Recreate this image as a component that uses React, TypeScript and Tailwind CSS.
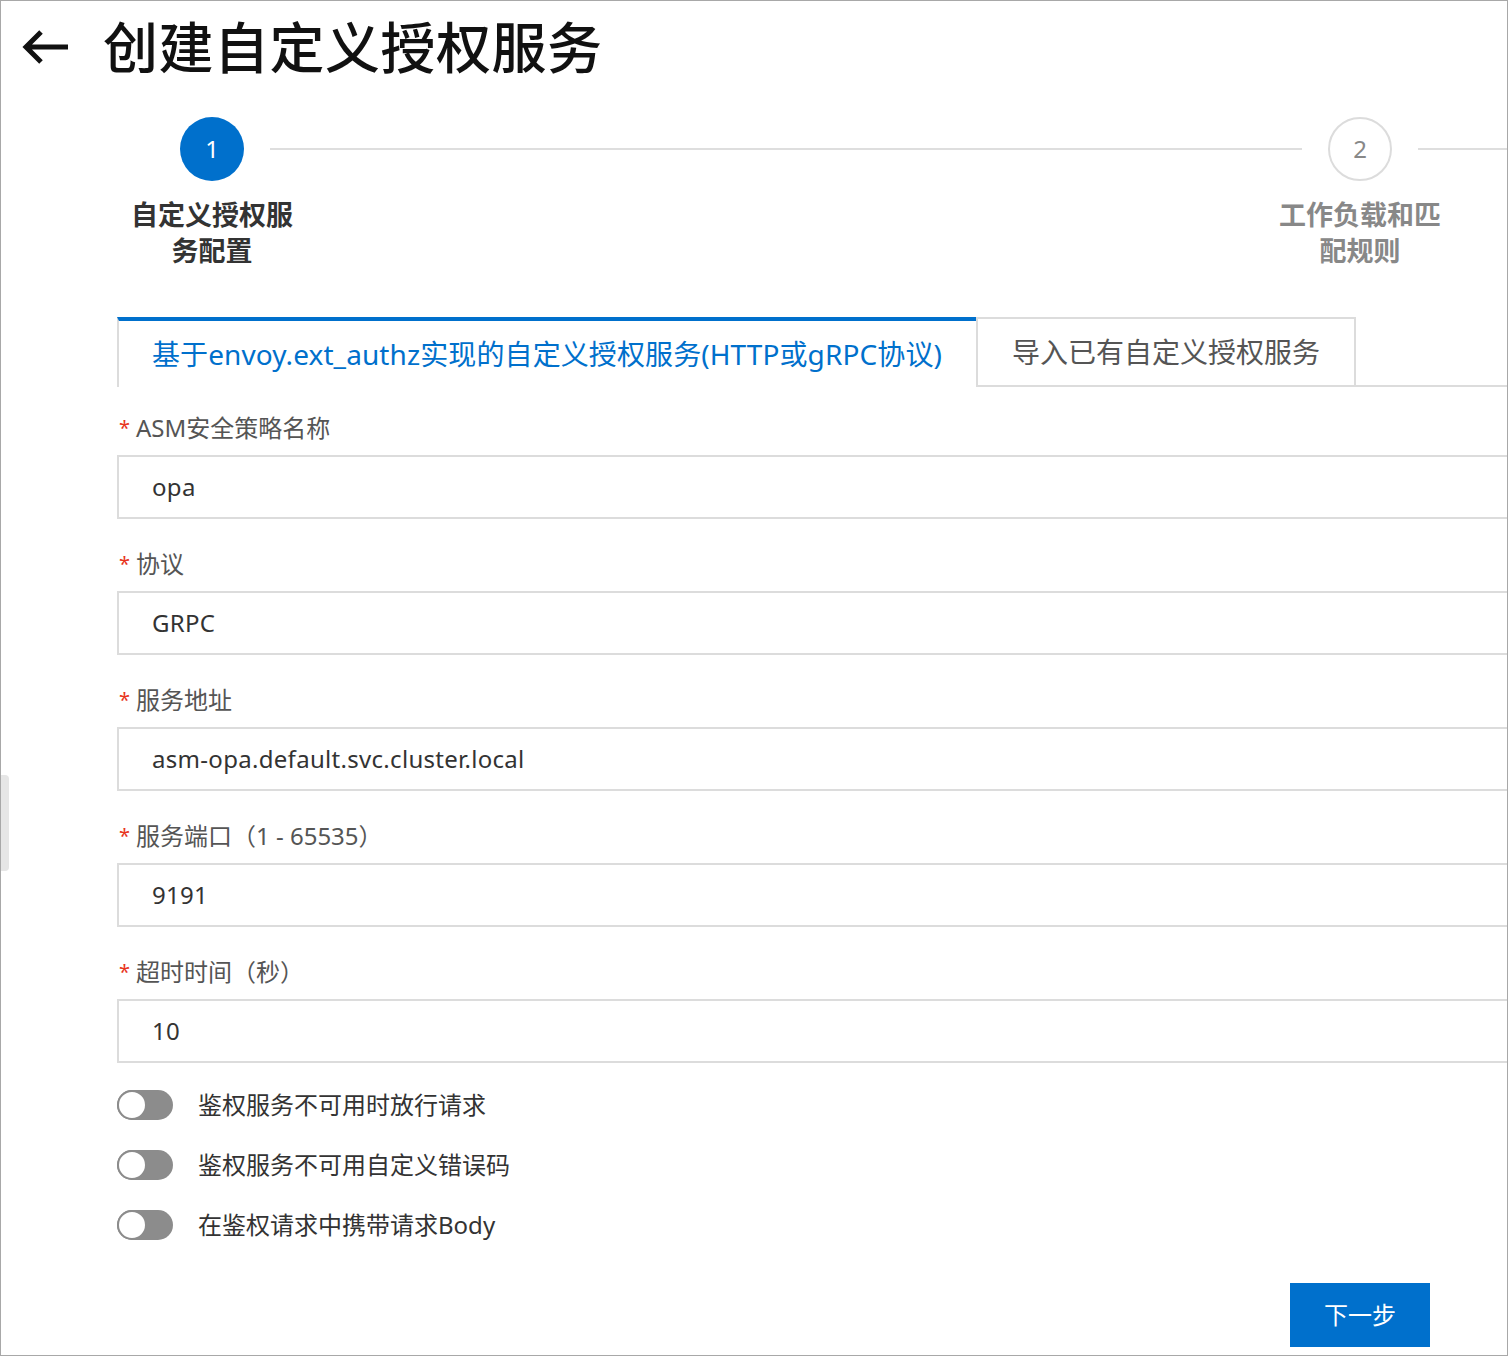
import React, { useState } from "react";

const fields = [
  { label: "ASM安全策略名称", value: "opa" },
  { label: "协议", value: "GRPC" },
  { label: "服务地址", value: "asm-opa.default.svc.cluster.local" },
  { label: "服务端口（1 - 65535）", value: "9191" },
  { label: "超时时间（秒）", value: "10" },
];

const switches = [
  "鉴权服务不可用时放行请求",
  "鉴权服务不可用自定义错误码",
  "在鉴权请求中携带请求Body",
];

const Toggle: React.FC<{ label: string }> = ({ label }) => {
  const [on, setOn] = useState(false);
  return (
    <div className="flex items-center h-[30px]">
      <button
        type="button"
        onClick={() => setOn(!on)}
        className={
          on
            ? "relative w-[56px] h-[30px] rounded-full bg-[#0070cc] shrink-0"
            : "relative w-[56px] h-[30px] rounded-full bg-[#8c8c8c] shrink-0"
        }
      >
        <span
          className={
            on
              ? "absolute top-0 right-0 w-[30px] h-[30px] rounded-full bg-white border-2 border-[#0070cc]"
              : "absolute top-0 left-0 w-[30px] h-[30px] rounded-full bg-white border-2 border-[#8c8c8c]"
          }
        />
      </button>
      <span className="ml-[25px] text-[24px] leading-[30px] text-[#333]">{label}</span>
    </div>
  );
};

const App: React.FC = () => {
  return (
    <div
      className="relative w-[1508px] h-[1356px] overflow-hidden bg-white border border-[#a8a8a8]"
      style={{ fontFamily: '"Noto Sans", "Noto Sans CJK SC", sans-serif' }}
    >
      {/* side handle */}
      <div className="absolute left-0 top-[774px] w-[8px] h-[96px] bg-[#e6e6e6] rounded-r-[4px]" />

      {/* header */}
      <div className="flex items-center h-[56px] mt-[18px] pl-[21px]">
        <svg width="48" height="36" viewBox="0 0 48 36" fill="none">
          <path
            d="M46 18H5M19 3L4 18l15 15"
            stroke="#111"
            strokeWidth="5"
            strokeLinecap="butt"
            strokeLinejoin="miter"
          />
        </svg>
        <h1 className="ml-[33px] text-[55px] leading-[56px] font-medium text-[#111] tracking-[0.5px]">
          创建自定义授权服务
        </h1>
      </div>

      {/* steps */}
      <div className="flex items-start pl-[179px] mt-[42px]">
        <div className="w-[64px] flex flex-col items-center shrink-0">
          <div className="w-[64px] h-[64px] rounded-full bg-[#0070cc] flex items-center justify-center text-white text-[24px]">
            1
          </div>
          <div className="w-[180px] shrink-0 mt-[16px] text-center text-[27px] leading-[36px] font-semibold text-[#333]">
            自定义授权服
            <br />
            务配置
          </div>
        </div>
        <div className="flex-1 h-[2px] bg-[#dedede] mx-[26px] mt-[31px]" />
        <div className="w-[64px] flex flex-col items-center shrink-0">
          <div className="w-[64px] h-[64px] rounded-full border-2 border-[#dcdcdc] bg-white flex items-center justify-center text-[#888] text-[24px]">
            2
          </div>
          <div className="w-[180px] shrink-0 mt-[16px] text-center text-[27px] leading-[36px] font-semibold text-[#888]">
            工作负载和匹
            <br />
            配规则
          </div>
        </div>
        <div className="w-[89px] shrink-0 h-[2px] bg-[#dedede] ml-[26px] mt-[31px]" />
      </div>

      {/* tabs */}
      <div className="flex items-stretch h-[70px] ml-[116px] mt-[48px]">
        <div className="w-[859px] shrink-0 border-t-4 border-t-[#0070cc] border-l-2 border-l-[#dcdcdc] pl-[33px] flex items-center text-[28px] text-[#0070cc] tracking-[0.1px]">
          基于envoy.ext_authz实现的自定义授权服务(HTTP或gRPC协议)
        </div>
        <div className="shrink-0 border-2 border-[#dcdcdc] px-[34px] flex items-center text-[28px] text-[#555]">
          导入已有自定义授权服务
        </div>
        <div className="flex-1 border-b-2 border-[#dcdcdc]" />
      </div>

      {/* form */}
      <div className="ml-[116px] mt-[29px]">
        {fields.map((f) => (
          <div key={f.label} className="mb-[33px]">
            <div className="flex items-center h-[24px] mb-[15px] text-[24px] leading-[24px] text-[#555]">
              <span className="text-[#e8341c] text-[20px] w-[19px] pl-[2px]">*</span>
              <span>{f.label}</span>
            </div>
            <div className="w-[1420px] h-[64px] border-2 border-[#dcdcdc] bg-white flex items-center pl-[33px] text-[24px] text-[#333] tracking-[0.3px]">
              {f.value}
            </div>
          </div>
        ))}

        <div className="flex flex-col gap-[30px] mt-[-6px]">
          {switches.map((s) => (
            <Toggle key={s} label={s} />
          ))}
        </div>
      </div>

      <div className="flex justify-end pr-[77px] mt-[43px]">
        <button
          type="button"
          className="w-[140px] h-[64px] bg-[#0070cc] text-white text-[24px]"
        >
          下一步
        </button>
      </div>
    </div>
  );
};

export default App;
